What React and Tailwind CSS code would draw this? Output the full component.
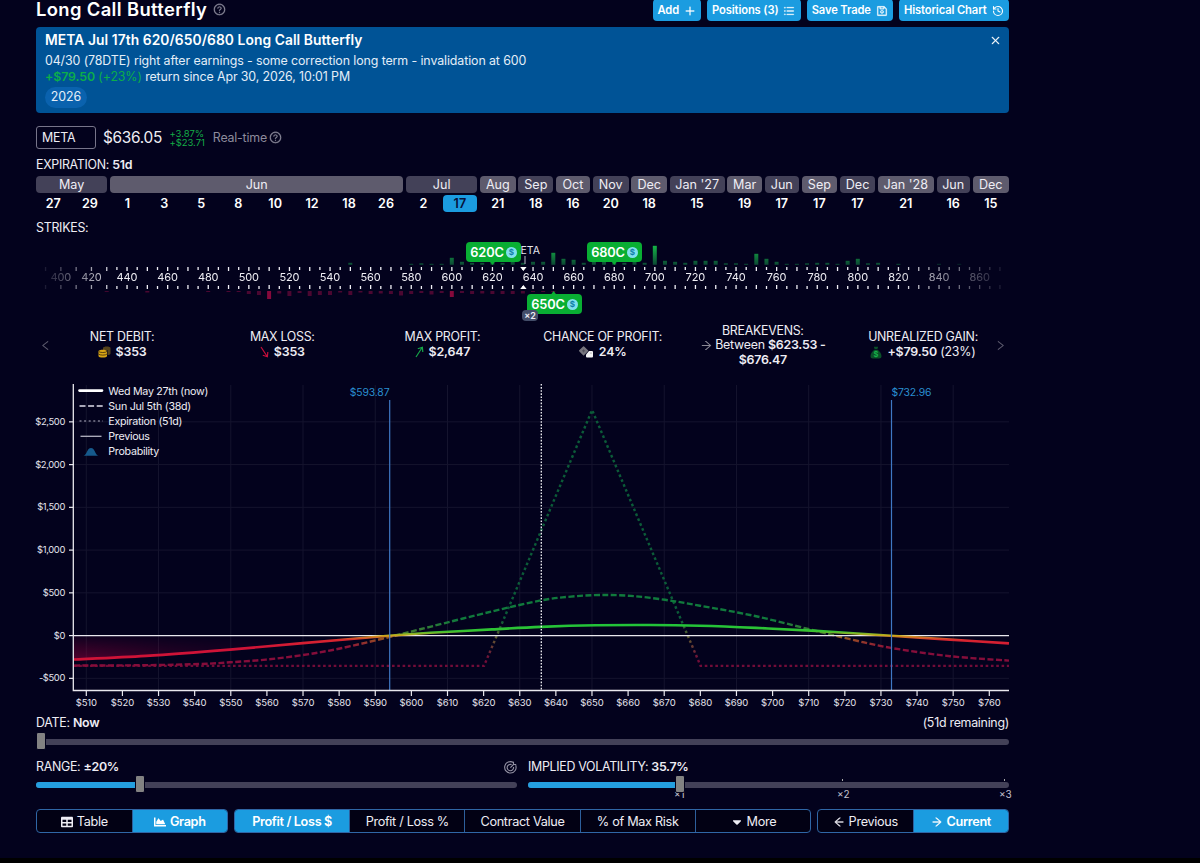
import {
  AiOutlineArrowLeft,
  AiOutlineArrowRight,
  AiOutlineClose,
  AiOutlineLeft,
  AiOutlinePlus,
  AiOutlineQuestionCircle,
  AiOutlineRight,
  AiOutlineSave,
  AiOutlineUnorderedList,
} from "react-icons/ai";
import { FaCaretDown, FaChartArea, FaTable } from "react-icons/fa";
import { History } from "lucide-react";

const MONTHS = [
  { name: "May", days: [27, 29] },
  { name: "Jun", days: [1, 3, 5, 8, 10, 12, 18, 26] },
  { name: "Jul", days: [2, 17] },
  { name: "Aug", days: [21] },
  { name: "Sep", days: [18] },
  { name: "Oct", days: [16] },
  { name: "Nov", days: [20] },
  { name: "Dec", days: [18] },
  { name: "Jan '27", days: [15] },
  { name: "Mar", days: [19] },
  { name: "Jun", days: [17] },
  { name: "Sep", days: [17] },
  { name: "Dec", days: [17] },
  { name: "Jan '28", days: [21] },
  { name: "Jun", days: [16] },
  { name: "Dec", days: [15] },
];

// open interest per strike, in pixels of bar height
const CALL_OI = {
  550: 2, 580: 1, 585: 1.5, 590: 1, 595: 1, 600: 7, 605: 3, 610: 2, 615: 2, 620: 3, 625: 2, 630: 3, 635: 2,
  640: 3, 645: 3, 650: 12, 655: 6, 660: 5, 665: 2, 670: 3, 675: 3, 680: 4, 685: 2, 690: 3, 695: 2, 700: 19,
  705: 4, 710: 3, 715: 2, 720: 4, 725: 4, 730: 4, 735: 1.5, 740: 1.5, 745: 1, 750: 11, 755: 6, 760: 3,
  765: 1, 770: 1, 775: 1.5, 780: 2, 785: 2, 790: 1, 795: 4, 800: 6, 805: 1.5, 810: 2, 820: 1, 840: 1, 850: 1,
};
const PUT_OI = {
  430: 1, 450: 1.5, 480: 1, 490: 1, 495: 1, 500: 3, 505: 4, 510: 8, 515: 2.5, 520: 5, 525: 2, 530: 5, 535: 4,
  540: 4, 545: 1.5, 550: 4, 555: 1.5, 560: 3, 565: 2.5, 570: 3, 575: 4.5, 580: 3, 585: 2, 590: 3.5, 595: 2,
  600: 6, 605: 2, 610: 3, 615: 2.5, 620: 3, 625: 3, 630: 3, 635: 2.5, 640: 1, 645: 1, 650: 1,
};

const strikeX = (s) => (s >= 430 ? 91 + (s - 440) * 2.03 : 70.7 + (s - 430) * 1.53);
const priceX = (p) => 50.3 + (p - 510) * 3.612;
const pnlY = (v) => 251.6 - v * 0.0855;

const STRIKES = [390, 400, 410, 420];
for (let s = 430; s <= 870; s += 5) STRIKES.push(s);

const TICKS = Array.from({ length: 26 }, (_, i) => 510 + i * 10);

function curve(points) {
  let d = `M${points[0][0]} ${points[0][1]}`;
  for (let i = 0; i < points.length - 1; i++) {
    const p0 = points[i - 1] || points[i];
    const p1 = points[i];
    const p2 = points[i + 1];
    const p3 = points[i + 2] || p2;
    d += ` C${p1[0] + (p2[0] - p0[0]) / 6} ${p1[1] + (p2[1] - p0[1]) / 6} ${p2[0] - (p3[0] - p1[0]) / 6} ${
      p2[1] - (p3[1] - p1[1]) / 6
    } ${p2[0]} ${p2[1]}`;
  }
  return d;
}

const NOW = curve([
  [38, 275.5], [110, 271.9], [194, 265.6], [267, 259.1], [353, 251.7], [394, 248.8], [456, 245.4],
  [505, 242.9], [560, 241.3], [614, 241], [664, 241.8], [720, 243.9], [780, 246.9], [855, 251.7],
  [914, 255.6], [973, 259.4],
]);
const MID = curve([
  [38, 281.6], [110, 281.2], [164, 280], [194, 278.3], [230, 275.6], [267, 271], [304, 264.5],
  [353, 253.1], [394, 242.8], [456, 227.4], [505, 216.4], [535, 212.6], [564, 211], [595, 211.9],
  [629, 215.8], [664, 221.7], [717, 231.6], [772, 244.9], [814, 255.2], [855, 263.9], [914, 272.2], [973, 276.6],
]);

function TopButton({ label, icon: Icon, className, ...iconProps }) {
  return (
    <button className={`flex h-[22px] items-center justify-center gap-[5px] rounded-[4px] bg-[#1b9ce0] pt-px text-[11.2px] font-semibold tracking-[-0.12px] text-white ${className}`}>
      {label}
      <Icon size={12} {...iconProps} />
    </button>
  );
}

function Expirations() {
  return (
    <div className="grid h-[37px] grid-cols-[71.3fr_293.6fr_71fr_36fr_34.6fr_34.3fr_36fr_35.6fr_55fr_34.6fr_34.3fr_35.6fr_35.3fr_56fr_33.3fr_36.5fr] gap-x-[2.7px]">
      {MONTHS.map((m, i) => (
        <div key={i} className="min-w-0">
          <div className={`flex h-[17px] items-center justify-center rounded-[4px] pt-px text-[12.6px] whitespace-nowrap ${i % 2 ? "bg-[#5e5b6d]" : "bg-[#434158]"}`}>
            {m.name}
          </div>
          <div className="mt-[2px] flex h-[17px] gap-[2px] text-[12.6px] font-semibold text-white">
            {m.days.map((d) => (
              <span
                key={d}
                className={`flex flex-1 items-center justify-center rounded-[4px] pt-px ${m.name === "Jul" && d === 17 ? "bg-[#1b9ce0] text-[#06113c]" : ""}`}>
                {d}
              </span>
            ))}
          </div>
        </div>
      ))}
    </div>
  );
}

function Pin({ label }) {
  return (
    <span className="flex h-[19.5px] w-[55px] items-center justify-center gap-[2px] rounded-[4px] bg-[#09ae33] pt-px text-[12.8px] font-semibold tracking-[-0.15px] text-white">
      {label}
      <span className="flex size-[11px] items-center justify-center rounded-full bg-[#7fe0ee] text-[8px] font-bold text-[#0e7fa8]">$</span>
    </span>
  );
}

function StrikeRuler() {
  return (
    <div className="relative h-[84px]">
      <svg width="973" height="84" className="block font-[Inter]">
        <defs>
          <linearGradient id="edge" x1="0" x2="1">
            <stop offset="0" stopColor="#fff" stopOpacity="0" />
            <stop offset="0.085" stopColor="#fff" stopOpacity="1" />
            <stop offset="0.88" stopColor="#fff" stopOpacity="1" />
            <stop offset="1" stopColor="#fff" stopOpacity="0.05" />
          </linearGradient>
          <mask id="fade">
            <rect width="973" height="84" fill="url(#edge)" />
          </mask>
          <linearGradient id="oi" gradientUnits="userSpaceOnUse" x1="0" x2="0" y1="6" y2="26">
            <stop offset="0" stopColor="#14b545" />
            <stop offset="1" stopColor="#0b4233" />
          </linearGradient>
        </defs>
        <g mask="url(#fade)">
          {Object.entries(CALL_OI).map(([s, h]) => (
            <rect key={s} x={strikeX(+s) - 2} y={24.8 - h} width="4" height={h} fill="url(#oi)" />
          ))}
          {Object.entries(PUT_OI).map(([s, h]) => (
            <rect key={s} x={strikeX(+s) - 2} y={51} width="4" height={h} fill={h > 5 ? "#85093b" : "#4b0731"} />
          ))}
          {STRIKES.map((s) => {
            const x = strikeX(s);
            const h = s % 10 ? 3 : 4;
            return (
              <g key={s} fill="#f0eff5">
                <rect x={x - 0.6} y={27} width="1.3" height={h} />
                <rect x={x - 0.6} y={49 - h} width="1.3" height={h} />
                {s % 20 === 0 && (
                  <text x={x} y={41.3} textAnchor="middle" fontSize="11" letterSpacing="-0.1">{s}</text>
                )}
              </g>
            );
          })}
        </g>
        <text x="484.5" y="13.8" fontSize="10.5" fill="#e6e5ee">ETA</text>
        <path d="M489 16v8" stroke="#b9b8c6" />
        <path d="M484.200 27h6.400l-3.200 4z M484.200 49h6.400l-3.200-4z" fill="#fff" />
        <path d="M453.500 21h6l-3 4z M575.300 21h6l-3 4z M514.600 55h6l-3-4z" fill="#09ae33" />
      </svg>
      <div className="absolute top-[2px] left-[430px]"><Pin label="620C" /></div>
      <div className="absolute top-[2px] left-[551px]"><Pin label="680C" /></div>
      <div className="absolute top-[54px] left-[491px]"><Pin label="650C" /></div>
      <span className="absolute top-[70px] left-[486px] flex h-[11px] w-4 items-center justify-center rounded-[4px] bg-[#434d69] text-[9px] font-semibold">×2</span>
    </div>
  );
}

function Coins() {
  return (
    <svg width="13" height="12" viewBox="0 0 13 12">
      <path d="M5 2c0-2 7.500-2 7.500 0v5.500c0 1-2 1.500-3 1.500V4H5z" fill="#54431d" />
      <path d="M.5 5.200c0-2 8.500-2 8.500 0v4.900c0 2-8.500 2-8.500 0z" fill="#d9a514" />
      <path d="M.5 5.400c1 1.500 7.500 1.500 8.500 0M.5 8c1 1.500 7.500 1.500 8.500 0" fill="none" stroke="#3b2b10" strokeWidth=".8" />
    </svg>
  );
}

function LossArrow() {
  return (
    <svg width="9" height="12" viewBox="0 0 9 12" fill="none" stroke="#c70f3c" strokeWidth="1.200">
      <path d="M1 1l6.200 9.500M2.800 9.300l4.600 1.500L7.800 6" />
    </svg>
  );
}

function ProfitArrow() {
  return (
    <svg width="9" height="12" viewBox="0 0 9 12" fill="none" stroke="#15a548" strokeWidth="1.200">
      <path d="M1 11l6.200-9.500M2.800 2.700l4.600-1.500L7.800 6" />
    </svg>
  );
}

function Dice() {
  return (
    <svg width="15" height="12" viewBox="0 0 15 12">
      <path d="M4.600.9l3.900 3.900-3.900 4L.7 4.800z" fill="#77767f" stroke="#77767f" strokeWidth="1.400" strokeLinejoin="round" />
      <path d="M3 4.800h3.200M4.600 3.200v3.200" stroke="#4a4955" strokeWidth=".8" />
      <path d="M10 5H13q1 0 1 1v4.500q0 1-1 1H8q-1 0-1-1V8.500z" fill="#f4f4f6" />
      <circle cx="12" cy="7" r=".6" fill="#777" />
    </svg>
  );
}

function MoneyBag() {
  return (
    <svg width="12" height="13" viewBox="0 0 12 13">
      <path d="M3.800.8h4.400L7.400 3h-2.800zM4.300 3.700h3.400C10 5.500 11.500 8 11.500 10.300 11.500 12 10.500 12.500 9 12.500H3C1.500 12.500.5 12 .5 10.300.5 8 2 5.500 4.300 3.700z" fill="#0a5028" />
      <text x="6" y="11" textAnchor="middle" fontSize="7.500" fontWeight="700" fill="#17b04a">$</text>
    </svg>
  );
}

function Stat({ title, children }) {
  return (
    <div className="flex w-[160.2px] flex-col items-center justify-center text-center text-[12.4px] leading-[14.6px]">
      <div className="tracking-[-0.28px]">{title}</div>
      <div className="flex items-center gap-[5px] tracking-[-0.15px]">{children}</div>
    </div>
  );
}

function Stats() {
  return (
    <div className="flex h-[44px] items-center">
      <AiOutlineLeft size={13} className="ml-[3px] text-[#5c5a6d]" />
      <div className="ml-[-10px] flex">
        <Stat title="NET DEBIT:"><Coins /><b className="font-semibold">$353</b></Stat>
        <Stat title="MAX LOSS:"><LossArrow /><b className="font-semibold">$353</b></Stat>
        <Stat title="MAX PROFIT:"><ProfitArrow /><b className="font-semibold">$2,647</b></Stat>
        <Stat title="CHANCE OF PROFIT:"><Dice /><b className="font-semibold">24%</b></Stat>
        <div className="flex w-[160.2px] flex-col items-center pt-px text-[12.4px] leading-[14.6px]">
          <div className="tracking-[-0.28px]">BREAKEVENS:</div>
          <div className="flex items-center gap-[2px] tracking-[-0.25px] whitespace-nowrap">
            <AiOutlineArrowRight size={13} className="text-[#8b8995]" />
            <span>Between <b className="font-semibold">$623.53 -</b></span>
          </div>
          <b className="font-semibold tracking-[-0.2px]">$676.47</b>
        </div>
        <Stat title="UNREALIZED GAIN:">
          <MoneyBag />
          <span className="tracking-[-0.2px]"><b className="font-semibold">+$79.50</b> (23%)</span>
        </Stat>
      </div>
      <AiOutlineRight size={13} className="ml-[-9px] text-[#5c5a6d]" />
    </div>
  );
}

function PnlChart() {
  return (
    <svg width="973" height="330" className="block overflow-visible font-[Inter]">
      <defs>
        <linearGradient id="pnl" gradientUnits="userSpaceOnUse" x1="0" x2="0" y1="240" y2="264">
          <stop offset="0" stopColor="#1fc43a" />
          <stop offset="0.3" stopColor="#35c232" />
          <stop offset="0.48" stopColor="#c9a81c" />
          <stop offset="0.66" stopColor="#d8262f" />
          <stop offset="1" stopColor="#cf1337" />
        </linearGradient>
        <linearGradient id="pnlDim" gradientUnits="userSpaceOnUse" x1="0" x2="0" y1="236" y2="268">
          <stop offset="0" stopColor="#107a3c" />
          <stop offset="0.45" stopColor="#4a7a30" />
          <stop offset="0.55" stopColor="#96581f" />
          <stop offset="0.85" stopColor="#8d1238" />
          <stop offset="1" stopColor="#850d3a" />
        </linearGradient>
        <linearGradient id="pnlDot" gradientUnits="userSpaceOnUse" x1="0" x2="0" y1="236" y2="275">
          <stop offset="0" stopColor="#0b5c38" />
          <stop offset="0.45" stopColor="#5d5a30" />
          <stop offset="1" stopColor="#720c38" />
        </linearGradient>
        <linearGradient id="lossV" x1="0" x2="0" y1="0" y2="1">
          <stop offset="0" stopColor="#95003c" stopOpacity="0.08" />
          <stop offset="1" stopColor="#95003c" stopOpacity="0.55" />
        </linearGradient>
        <linearGradient id="lossH" x1="0" x2="1">
          <stop offset="0" stopColor="#fff" />
          <stop offset="0.4" stopColor="#fff" stopOpacity="0.5" />
          <stop offset="1" stopColor="#fff" stopOpacity="0" />
        </linearGradient>
        <mask id="lossMask">
          <rect x="38" y="250" width="240" height="26" fill="url(#lossH)" />
        </mask>
      </defs>

      {/* grid */}
      <g stroke="#15142e">
        {TICKS.filter((t) => t % 20 === 10).map((t) => (
          <path key={t} d={`M${priceX(t)} 1V306`} />
        ))}
        {[-500, 500, 1000, 1500, 2000, 2500].map((v) => (
          <path key={v} d={`M38 ${pnlY(v)}H973`} />
        ))}
      </g>

      {/* loss area, limited to the left side of the range */}
      <g mask="url(#lossMask)">
        <path d={`${NOW.slice(0, NOW.indexOf("353 251.7") + 9)} L38 251.7Z`} fill="url(#lossV)" />
      </g>

      <g fill="none">
        <path d="M38 281.900H448L556.100 26L664.600 281.900H973" stroke="url(#pnlDot)" strokeWidth="2.400" strokeDasharray="2.600 2.700" />
        <path d={MID} stroke="url(#pnlDim)" strokeWidth="2.400" strokeDasharray="6 2.500" />
        <path d="M37 251.600H973" stroke="#e9e8ee" strokeWidth="1.200" />
        <path d={NOW} stroke="url(#pnl)" strokeWidth="2.600" />
        <path d="M353.700 16V306M855.500 16V306" stroke="#3f78c4" strokeWidth="1.200" />
        <path d="M505.300 0V306" stroke="#f4f4f8" strokeWidth="1.300" strokeDasharray="1.600 1.500" />
        <path d="M37.300 0V306.500H973" stroke="#e9e8ee" strokeWidth="1.300" />
      </g>

      {TICKS.map((t) => (
        <g key={t}>
          <path d={`M${priceX(t)} 307v5`} stroke="#e9e8ee" strokeWidth="1.200" />
          <text x={priceX(t)} y="322.300" textAnchor="middle" fontSize="9.500" letterSpacing="-0.1" fill="#e6e5ee">${t}</text>
        </g>
      ))}
      {[-500, 0, 500, 1000, 1500, 2000, 2500].map((v) => (
        <g key={v}>
          <path d={`M33 ${pnlY(v)}h4.500`} stroke="#e9e8ee" strokeWidth="1.200" />
          <text x="29" y={pnlY(v) + 3} textAnchor="end" fontSize="9.400" letterSpacing="-0.35" fill="#e6e5ee">
            {v < 0 ? "-$" : "$"}{Math.abs(v).toLocaleString("en-US")}
          </text>
        </g>
      ))}

      <g fontSize="10.400" letterSpacing="-0.15" fill="#2a8fd0">
        <text x="353.400" y="12" textAnchor="end">$593.87</text>
        <text x="855.500" y="12">$732.96</text>
      </g>

      {/* legend */}
      <g stroke="#fff" fill="none">
        <path d="M43.500 6.600H66" strokeWidth="2.600" strokeLinecap="round" />
        <path d="M43.500 21.900H67" stroke="#a9a8b8" strokeWidth="2" strokeDasharray="6 2.600" />
        <path d="M43.500 37H67" stroke="#7d7c90" strokeWidth="1.600" strokeDasharray="2 2.600" />
        <path d="M44.500 52.300H65.500" stroke="#b5b4c2" strokeWidth="1.300" />
      </g>
      <path d="M47.500 71.800C51 71 51 64 55 64s4 7 7.500 7.800z" fill="#165a8c" />
      <g fontSize="10.700" letterSpacing="-0.28" fill="#eeedf4">
        <text x="72.300" y="10.500">Wed May 27th (now)</text>
        <text x="72.300" y="25.600">Sun Jul 5th (38d)</text>
        <text x="72.300" y="40.800">Expiration (51d)</text>
        <text x="72.300" y="56">Previous</text>
        <text x="72.300" y="71.200">Probability</text>
      </g>
    </svg>
  );
}

function Slider({ fill, thumb }) {
  return (
    <div className="relative flex h-[18px] items-center">
      <div className="h-[6px] w-full overflow-hidden rounded-full bg-[#434158]">
        <div className="h-full bg-[#249fe0]" style={{ width: fill }} />
      </div>
      <span className="absolute -top-px h-[18px] w-[10px] rounded-[2px] border border-[#03021d] bg-[#828282]" style={{ left: thumb }} />
    </div>
  );
}

function TargetIcon() {
  return (
    <svg width="13" height="13" viewBox="0 0 13 13" fill="none" stroke="#9391a3" strokeWidth="1.100">
      <path d="M9.400 1.500A5.700 5.700 0 1 0 11.700 4.300" />
      <path d="M7.600 3.600A3.200 3.200 0 1 0 9.500 6" />
      <path d="M6.400 6.700L10 3M9.500.8v2.700h2.700" />
    </svg>
  );
}

function Segment({ active, children }) {
  return (
    <button
      className={`flex flex-1 items-center justify-center gap-1 border-l border-[#2d5f9c] pt-px text-[12.7px] whitespace-nowrap first:border-l-0 ${
        active ? "bg-[#1b9ce0] font-semibold tracking-[-0.34px] text-white" : "tracking-[-0.32px]"
      }`}>
      {children}
    </button>
  );
}

function SegmentGroup({ className, children }) {
  return (
    <div className={`flex h-[24px] overflow-hidden rounded-[4px] border border-[#2f66a6] bg-[#020114] ${className}`}>
      {children}
    </div>
  );
}

export default function App() {
  return (
    <div className="h-[863px] overflow-hidden border-b-[5px] border-black bg-[#03021d] font-[Inter,sans-serif] text-[#eeedf4]">
      <div className="ml-9 w-[973px]">
        <header className="flex h-[27px] items-start justify-between">
          <div className="flex h-[19px] items-center gap-1.5">
            <h1 className="text-[18.4px] leading-[19px] font-semibold tracking-[0.36px] text-white">Long Call Butterfly</h1>
            <AiOutlineQuestionCircle size={13} strokeWidth={20} className="text-[#8d8b9c]" />
          </div>
          <div className="-mt-px flex gap-1.5">
            <TopButton label="Add" icon={AiOutlinePlus} strokeWidth={25} className="w-[47.5px]" />
            <TopButton label="Positions (3)" icon={AiOutlineUnorderedList} strokeWidth={25} className="w-[94.5px]" />
            <TopButton label="Save Trade" icon={AiOutlineSave} strokeWidth={25} className="w-[85.5px]" />
            <TopButton label="Historical Chart" icon={History} strokeWidth={2.2} className="w-[110.5px]" />
          </div>
        </header>

        <section className="flex h-[86px] justify-between rounded-[4px] bg-[#005396] px-[9px] pt-[5px] text-[#e4eef8]">
          <div>
            <h2 className="text-[13.8px] leading-[17px] font-semibold tracking-[0.08px] text-white">META Jul 17th 620/650/680 Long Call Butterfly</h2>
            <p className="mt-[3.5px] text-[12.4px] leading-4 tracking-[-0.1px]">04/30 (78DTE) right after earnings - some correction long term - invalidation at 600</p>
            <p className="text-[12.4px] leading-4 tracking-[-0.12px]">
              <span className="text-[#0cae4a]"><b className="font-semibold">+$79.50</b> (+23%)</span> return since Apr 30, 2026, 10:01 PM
            </p>
            <span className="mt-[2.5px] flex h-[21px] w-[42px] items-center justify-center rounded-full bg-[#0a62ae] text-[12.4px]">2026</span>
          </div>
          <AiOutlineClose size={11} strokeWidth={30} className="mt-[3px] -mr-px text-white" />
        </section>

        <div className="mt-[13px] flex h-[23px] items-center">
          <div className="flex h-[23px] w-[60px] items-center rounded-[3px] border border-[#77758a] pt-px pl-[5px] text-[12.4px] tracking-[-0.2px]">META</div>
          <span className="ml-[7px] text-[15.4px] tracking-[-0.3px]">$636.05</span>
          <span className="ml-[7.5px] text-[9.5px] leading-[9px] tracking-[-0.05px] text-[#14ad46]">
            +3.87%
            <br />
            +$23.71
          </span>
          <span className="ml-[8px] pt-px text-[12.4px] tracking-[-0.2px] text-[#8d8b9c]">Real-time</span>
          <AiOutlineQuestionCircle size={13} strokeWidth={20} className="ml-[2px] text-[#8d8b9c]" />
        </div>

        <div className="mt-[8px] h-[19px] text-[12.4px] leading-4 tracking-[-0.3px]">EXPIRATION: <b className="font-semibold">51d</b></div>
        <Expirations />
        <div className="mt-[7px] h-5 text-[12.4px] leading-4 tracking-[-0.27px]">STRIKES:</div>
        <StrikeRuler />
        <div className="-mt-px"><Stats /></div>
        <div className="mt-[17px]"><PnlChart /></div>

        <div className="flex h-[19px] items-start justify-between text-[12.4px] leading-[18px] tracking-[-0.27px]">
          <span>DATE: <b className="font-semibold">Now</b></span>
          <span>(51d remaining)</span>
        </div>
        <Slider fill="0%" thumb="0px" />

        <div className="mt-[8px] grid grid-cols-2 gap-x-[11px]">
          <div>
            <div className="flex h-[17px] items-center justify-between text-[12.4px] tracking-[-0.3px]">
              <span>RANGE: <b className="font-semibold">±20%</b></span>
              <TargetIcon />
            </div>
            <Slider fill="21%" thumb="99px" />
          </div>
          <div className="relative">
            <div className="flex h-[17px] items-center text-[12.4px] tracking-[-0.3px]">
              <span>IMPLIED VOLATILITY: <b className="font-semibold">35.7%</b></span>
            </div>
            <span className="absolute top-[28px] left-[146px] text-[10px] text-[#c4c3cf]">×1</span>
            <Slider fill="31%" thumb="147px" />
            <span className="absolute top-[20px] left-[314px] h-[2px] w-px bg-[#aaa]" />
            <span className="absolute top-[20px] left-[476px] h-[2px] w-px bg-[#aaa]" />
            <span className="absolute top-[28px] left-[309px] text-[10px] text-[#c4c3cf]">×2</span>
            <span className="absolute top-[28px] left-[471px] text-[10px] text-[#c4c3cf]">×3</span>
          </div>
        </div>

        <div className="mt-[15px] flex gap-[6px]">
          <SegmentGroup className="w-[192px]">
            <Segment><FaTable size={12} />Table</Segment>
            <Segment active><FaChartArea size={12} />Graph</Segment>
          </SegmentGroup>
          <SegmentGroup className="w-[577px]">
            <Segment active>Profit / Loss $</Segment>
            <Segment>Profit / Loss %</Segment>
            <Segment>Contract Value</Segment>
            <Segment>% of Max Risk</Segment>
            <Segment><FaCaretDown size={14} className="-mr-px" />More</Segment>
          </SegmentGroup>
          <SegmentGroup className="w-[192px]">
            <Segment><AiOutlineArrowLeft size={12} strokeWidth={30} />Previous</Segment>
            <Segment active><AiOutlineArrowRight size={12} strokeWidth={30} />Current</Segment>
          </SegmentGroup>
        </div>
      </div>
    </div>
  );
}
